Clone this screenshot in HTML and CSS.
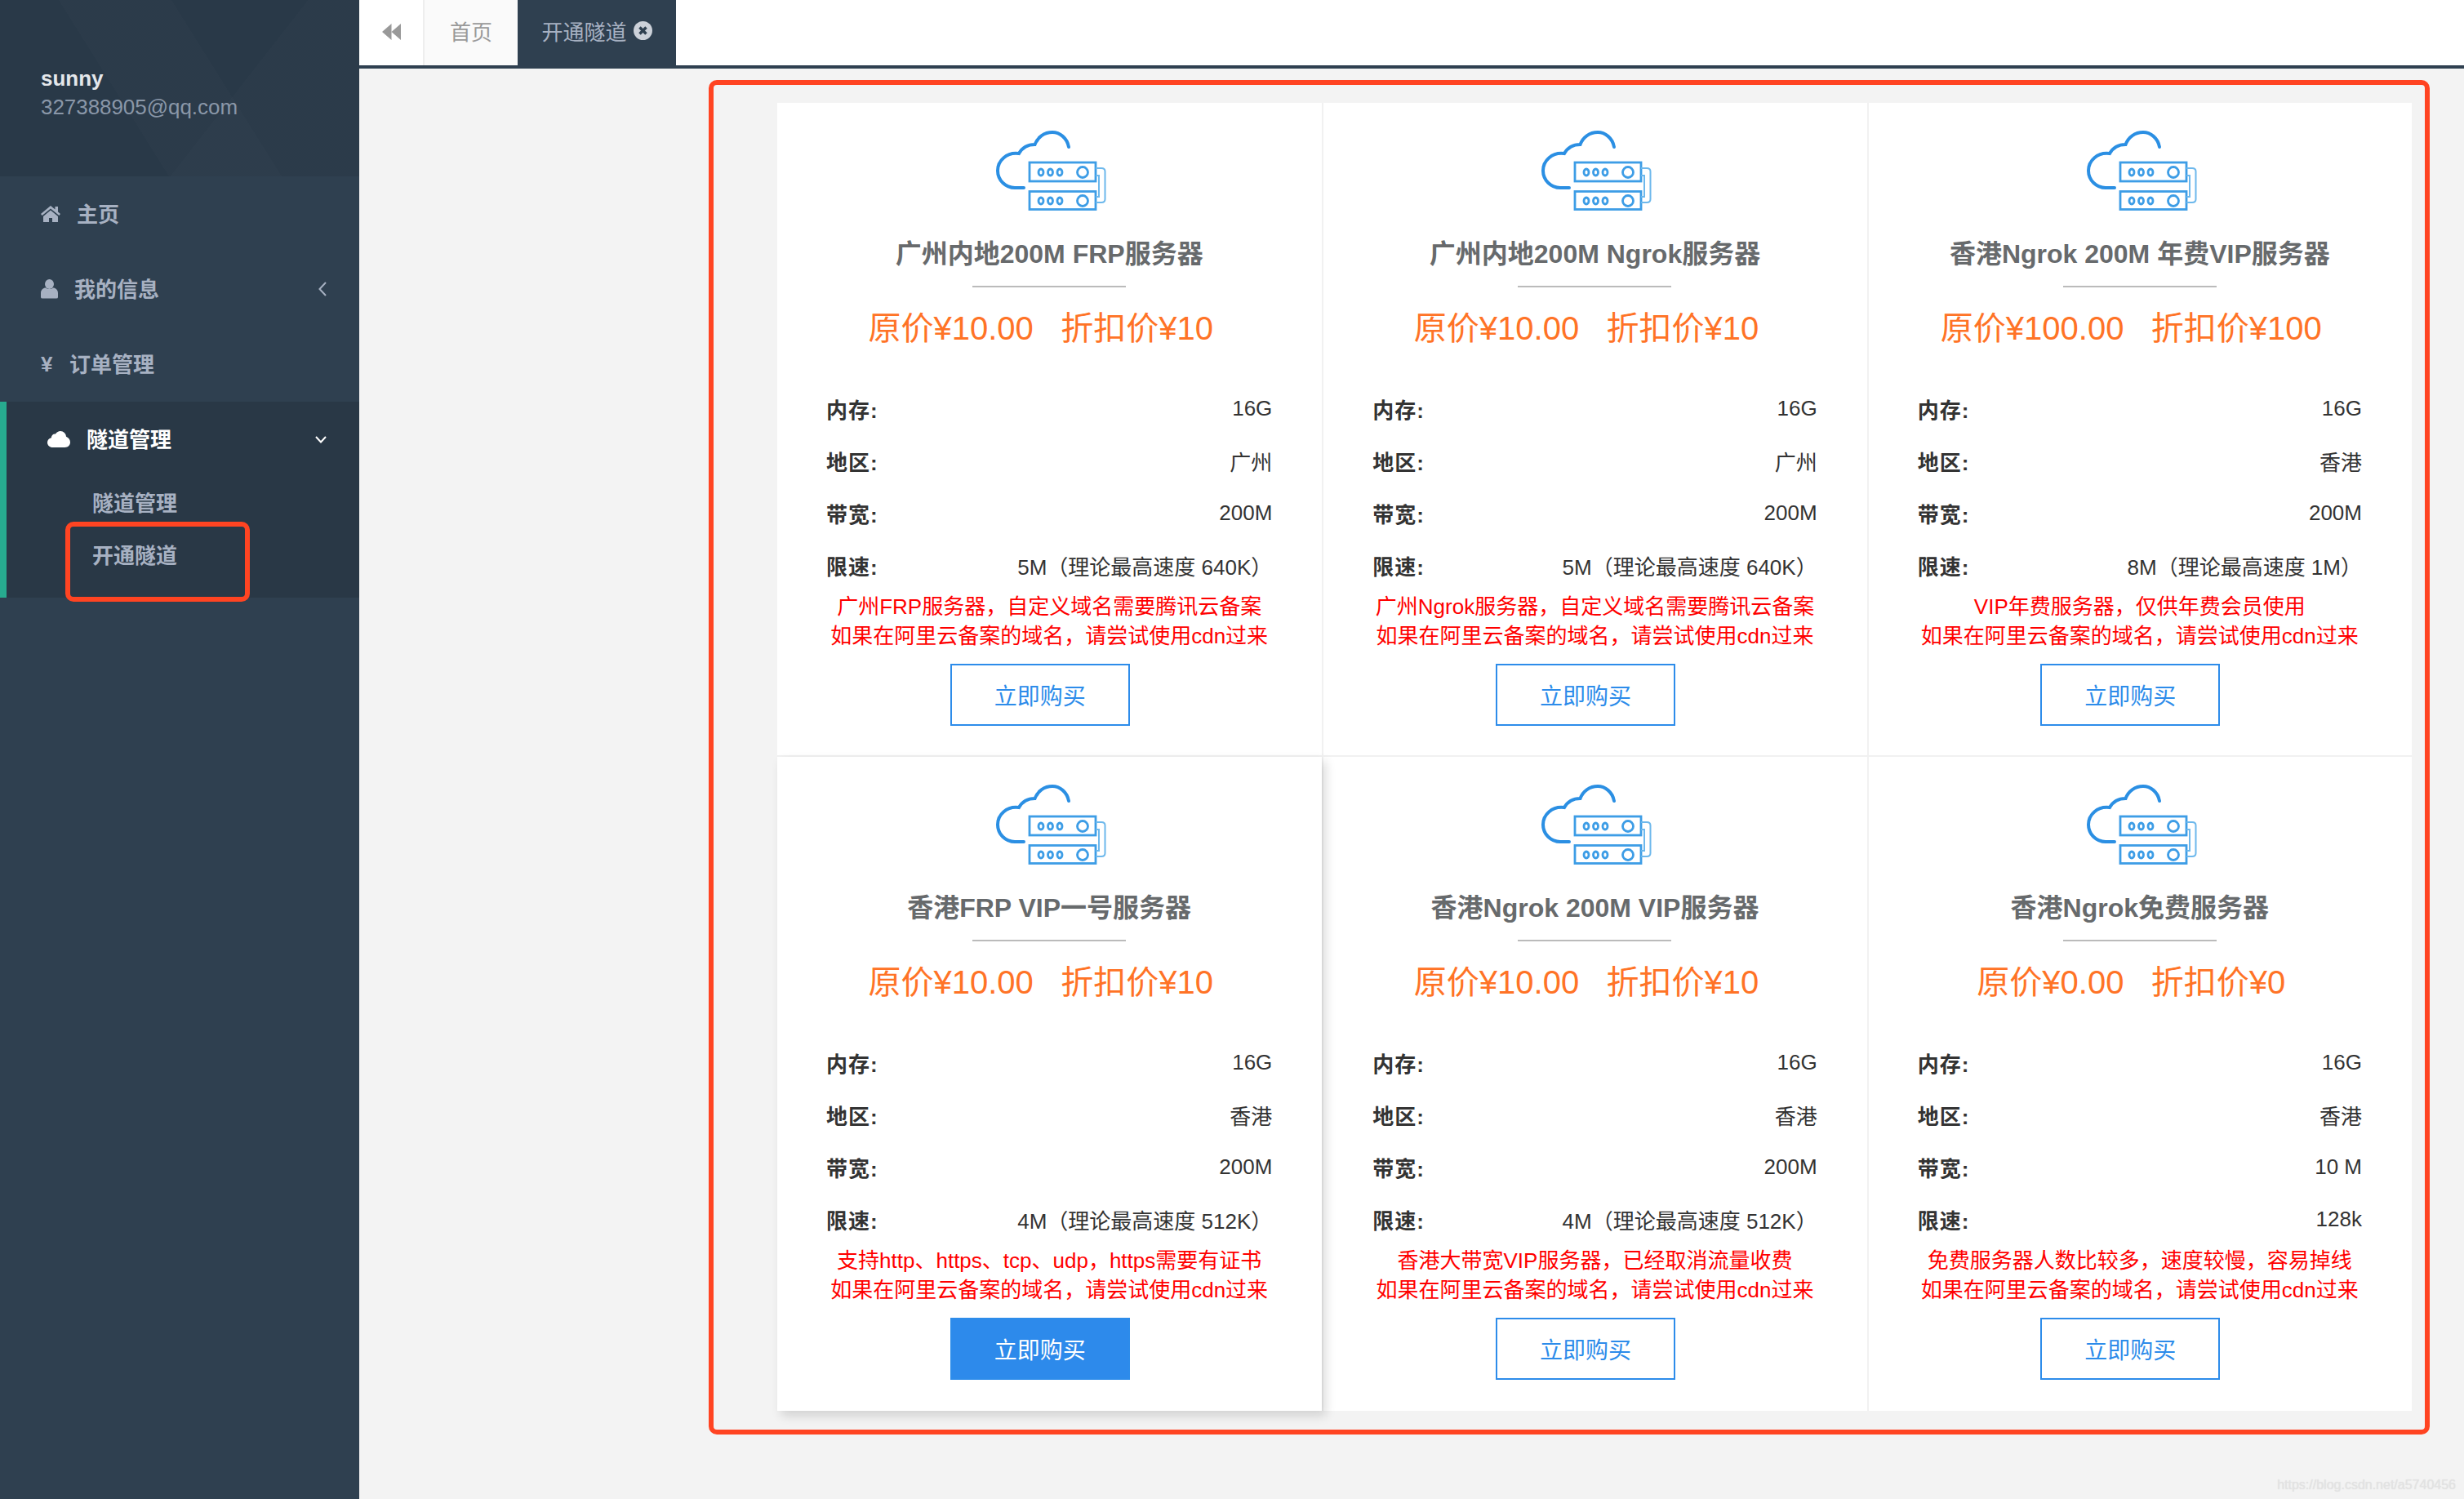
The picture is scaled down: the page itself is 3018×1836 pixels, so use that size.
FILE: index.html
```html
<!DOCTYPE html>
<html lang="en">
<head>
  <meta charset="UTF-8" />
  <title>开通隧道</title>
  <link rel="stylesheet" href="styles.css">
</head>
<body>
  <!-- shared server icon -->
  <svg class="defs" aria-hidden="true">
    <symbol id="server-cloud" viewBox="0 0 136 98">
      <path class="cloud" d="M90 20C88 9 79 2 70 2C60 2 52 8 48.500 17C40 17 33 21 29 28C14 26 3 37 3 49C3 61 13 70 24 70L35 70" />
      <g class="rack">
        <rect x="42" y="39" width="81" height="23" />
        <rect x="42" y="74.500" width="81" height="22" />
        <ellipse cx="56" cy="51" rx="3" ry="4" />
        <ellipse cx="67.500" cy="51" rx="3" ry="4" />
        <ellipse cx="79" cy="51" rx="3" ry="4" />
        <circle cx="107" cy="51" r="6.500" />
        <ellipse cx="56" cy="86" rx="3" ry="4" />
        <ellipse cx="67.500" cy="86" rx="3" ry="4" />
        <ellipse cx="79" cy="86" rx="3" ry="4" />
        <circle cx="107" cy="86" r="6.500" />
      </g>
      <path class="link" d="M123 46H130Q134.500 46 134.500 50V84Q134.500 88 130 88H123M123 55H127V81H123" />
    </symbol>
  </svg>

  <aside class="sidebar">
    <div class="profile">
      <strong class="profile-name">sunny</strong>
      <span class="profile-mail">327388905@qq.com</span>
    </div>
    <nav>
      <a class="nav-item">
        <svg class="nav-icon" width="24" height="20" viewBox="0 0 24 20"><path d="M12 0L17.500 4.600V1H21V7.500L24 10L22.400 12L12 3.600L1.600 12L0 10ZM12 5.500L21 13V20H14V15H10V20H3V13Z" /></svg>
        <span class="nav-label">主页</span>
      </a>
      <a class="nav-item">
        <svg class="nav-icon" width="21" height="24" viewBox="0 0 21 24"><ellipse cx="10.500" cy="6" rx="5.500" ry="6" /><path d="M0 22V17C0 13 3 10.500 6 10.500C7.300 11.500 9 12 10.500 12S13.700 11.500 15 10.500C18 10.500 21 13 21 17V22Q21 23.500 19 23.500H2Q0 23.500 0 22Z" /></svg>
        <span class="nav-label">我的信息</span>
        <svg class="nav-arrow" width="10" height="18" viewBox="0 0 10 18"><path d="M9 1L1.500 9L9 17" /></svg>
      </a>
      <a class="nav-item">
        <span class="nav-yen">¥</span>
        <span class="nav-label">订单管理</span>
      </a>
      <div class="nav-group">
        <a class="nav-item nav-item-open">
          <svg class="nav-icon" width="28" height="20" viewBox="0 0 28 20"><path d="M6.500 20C2.900 20 0 17.400 0 14C0 11.100 2 8.800 4.800 8.200C5 4.800 7.600 3 10 3.500C11.400 1.300 13.700 0 16 0C19.700 0 22.800 3 23 6.700C26 7.900 28 10.700 28 13.800C28 17.200 25.200 20 21.500 20Z" /></svg>
          <span class="nav-label">隧道管理</span>
          <svg class="nav-arrow" width="14" height="9" viewBox="0 0 14 9"><path d="M1 1L7 7.500L13 1" /></svg>
        </a>
        <a class="nav-sub">隧道管理</a>
        <a class="nav-sub">开通隧道</a>
        <div class="mark-box"></div>
      </div>
    </nav>
  </aside>

  <main class="main">
    <header class="tabs">
      <button class="tab-back" aria-label="back">
        <svg width="23" height="20" viewBox="0 0 23 20"><path d="M0 10L11.500 0V20ZM11.500 10L23 0V20Z" /></svg>
      </button>
      <a class="tab">首页</a>
      <a class="tab tab-active">
        开通隧道
        <svg width="23" height="23" viewBox="0 0 23 23"><circle cx="11.500" cy="11.500" r="11.500" /><path d="M7.500 7.500L15.500 15.500M15.500 7.500L7.500 15.500" /></svg>
      </a>
    </header>

    <div class="frame">
      <section class="plans">

        <article class="plan">
          <svg class="plan-icon"><use href="#server-cloud" /></svg>
          <h3>广州内地200M FRP服务器</h3>
          <div class="plan-rule"></div>
          <p class="plan-price">原价¥10.00&nbsp;&nbsp;&nbsp;折扣价¥10</p>
          <dl class="specs">
            <div><dt>内存:</dt><dd>16G</dd></div>
            <div><dt>地区:</dt><dd>广州</dd></div>
            <div><dt>带宽:</dt><dd>200M</dd></div>
            <div><dt>限速:</dt><dd>5M（理论最高速度 640K）</dd></div>
          </dl>
          <p class="plan-note">广州FRP服务器，自定义域名需要腾讯云备案<br />如果在阿里云备案的域名，请尝试使用cdn过来</p>
          <a class="buy">立即购买</a>
        </article>

        <article class="plan">
          <svg class="plan-icon"><use href="#server-cloud" /></svg>
          <h3>广州内地200M Ngrok服务器</h3>
          <div class="plan-rule"></div>
          <p class="plan-price">原价¥10.00&nbsp;&nbsp;&nbsp;折扣价¥10</p>
          <dl class="specs">
            <div><dt>内存:</dt><dd>16G</dd></div>
            <div><dt>地区:</dt><dd>广州</dd></div>
            <div><dt>带宽:</dt><dd>200M</dd></div>
            <div><dt>限速:</dt><dd>5M（理论最高速度 640K）</dd></div>
          </dl>
          <p class="plan-note">广州Ngrok服务器，自定义域名需要腾讯云备案<br />如果在阿里云备案的域名，请尝试使用cdn过来</p>
          <a class="buy">立即购买</a>
        </article>

        <article class="plan">
          <svg class="plan-icon"><use href="#server-cloud" /></svg>
          <h3>香港Ngrok 200M 年费VIP服务器</h3>
          <div class="plan-rule"></div>
          <p class="plan-price">原价¥100.00&nbsp;&nbsp;&nbsp;折扣价¥100</p>
          <dl class="specs">
            <div><dt>内存:</dt><dd>16G</dd></div>
            <div><dt>地区:</dt><dd>香港</dd></div>
            <div><dt>带宽:</dt><dd>200M</dd></div>
            <div><dt>限速:</dt><dd>8M（理论最高速度 1M）</dd></div>
          </dl>
          <p class="plan-note">VIP年费服务器，仅供年费会员使用<br />如果在阿里云备案的域名，请尝试使用cdn过来</p>
          <a class="buy">立即购买</a>
        </article>

        <article class="plan plan-hover">
          <svg class="plan-icon"><use href="#server-cloud" /></svg>
          <h3>香港FRP VIP一号服务器</h3>
          <div class="plan-rule"></div>
          <p class="plan-price">原价¥10.00&nbsp;&nbsp;&nbsp;折扣价¥10</p>
          <dl class="specs">
            <div><dt>内存:</dt><dd>16G</dd></div>
            <div><dt>地区:</dt><dd>香港</dd></div>
            <div><dt>带宽:</dt><dd>200M</dd></div>
            <div><dt>限速:</dt><dd>4M（理论最高速度 512K）</dd></div>
          </dl>
          <p class="plan-note">支持http、https、tcp、udp，https需要有证书<br />如果在阿里云备案的域名，请尝试使用cdn过来</p>
          <a class="buy">立即购买</a>
        </article>

        <article class="plan">
          <svg class="plan-icon"><use href="#server-cloud" /></svg>
          <h3>香港Ngrok 200M VIP服务器</h3>
          <div class="plan-rule"></div>
          <p class="plan-price">原价¥10.00&nbsp;&nbsp;&nbsp;折扣价¥10</p>
          <dl class="specs">
            <div><dt>内存:</dt><dd>16G</dd></div>
            <div><dt>地区:</dt><dd>香港</dd></div>
            <div><dt>带宽:</dt><dd>200M</dd></div>
            <div><dt>限速:</dt><dd>4M（理论最高速度 512K）</dd></div>
          </dl>
          <p class="plan-note">香港大带宽VIP服务器，已经取消流量收费<br />如果在阿里云备案的域名，请尝试使用cdn过来</p>
          <a class="buy">立即购买</a>
        </article>

        <article class="plan">
          <svg class="plan-icon"><use href="#server-cloud" /></svg>
          <h3>香港Ngrok免费服务器</h3>
          <div class="plan-rule"></div>
          <p class="plan-price">原价¥0.00&nbsp;&nbsp;&nbsp;折扣价¥0</p>
          <dl class="specs">
            <div><dt>内存:</dt><dd>16G</dd></div>
            <div><dt>地区:</dt><dd>香港</dd></div>
            <div><dt>带宽:</dt><dd>10 M</dd></div>
            <div><dt>限速:</dt><dd>128k</dd></div>
          </dl>
          <p class="plan-note">免费服务器人数比较多，速度较慢，容易掉线<br />如果在阿里云备案的域名，请尝试使用cdn过来</p>
          <a class="buy">立即购买</a>
        </article>

      </section>
    </div>

    <span class="watermark">https://blog.csdn.net/a5740456</span>
  </main>
</body>
</html>
```

FILE: styles.css
```css
* {
  box-sizing: border-box;
}

body {
  margin: 0;
  height: 100vh;
  display: flex;
  overflow: hidden;
  font-family: "Liberation Sans", "Noto Sans CJK SC", sans-serif;
  font-size: 26px;
  background: #f3f3f3;
}

.defs {
  position: absolute;
  width: 0;
  height: 0;
}

/* Sidebar */
.sidebar {
  width: 440px;
  flex-shrink: 0;
  background: #2f4050;
  color: #a7b1c2;
}

.profile {
  height: 216px;
  padding: 81px 0 0 50px;
  display: flex;
  flex-direction: column;
  gap: 5px;
  line-height: 30px;
  background:
    linear-gradient(128deg, transparent 62%, rgba(255, 255, 255, 0.012) 62%),
    linear-gradient(58deg, transparent 36%, rgba(255, 255, 255, 0.012) 36%, rgba(255, 255, 255, 0.012) 60%, transparent 60%),
    #293948;
}

.profile-name {
  color: #e4e7eb;
}

.profile-mail {
  color: #8a97a8;
  letter-spacing: -0.05px;
}

.nav-item {
  height: 92px;
  padding: 0 40px 0 50px;
  display: flex;
  align-items: center;
  gap: 20px;
  font-weight: bold;
}

.nav-label {
  margin-bottom: 3px;
}

.nav-icon {
  fill: #a7b1c2;
}

.nav-yen {
  width: 15px;
}

.nav-arrow {
  margin-left: auto;
  fill: none;
  stroke: #a7b1c2;
  stroke-width: 2;
}

.nav-group {
  position: relative;
  height: 240px;
  border-left: 8px solid #27ab8f;
  background: #293846;
}

.nav-item-open {
  color: #fff;
}

.nav-item-open .nav-icon {
  fill: #fff;
}

.nav-item-open .nav-arrow {
  stroke: #fff;
}

.nav-sub {
  display: block;
  height: 64px;
  line-height: 64px;
  padding-left: 105px;
  font-weight: bold;
}

.nav-item-open + .nav-sub {
  margin-top: 1px;
}

/* red annotation round the menu entry */
.mark-box {
  position: absolute;
  top: 147px;
  left: 72px;
  width: 226px;
  height: 98px;
  border: 6px solid #ff4422;
  border-radius: 10px;
}

/* Main area */
.main {
  flex: 1;
  position: relative;
}

.tabs {
  height: 84px;
  display: flex;
  background: #fff;
  border-bottom: 4px solid #2f4050;
}

.tab-back {
  width: 78px;
  padding: 0;
  border: none;
  background: #fff;
}

.tab-back svg {
  fill: #999;
}

.tab {
  width: 116px;
  padding-bottom: 5px;
  display: flex;
  align-items: center;
  justify-content: center;
  gap: 8px;
  color: #999;
  background: #fafafa;
  border-left: 2px solid #eee;
}

.tab-active {
  width: 194px;
  border-left: none;
  color: #a7b1c2;
  background: #2f4050;
}

.tab-active circle {
  fill: #ccd1d9;
}

.tab-active path {
  fill: none;
  stroke: #2f4050;
  stroke-width: 3.500;
}

.frame {
  margin: 14px 42px 0 428px;
  padding: 22px 16px 23px 78px;
  border: 6px solid #ff4422;
  border-radius: 10px;
}

.plans {
  display: grid;
  grid-template-columns: repeat(3, 1fr);
}

.plan {
  position: relative;
  height: 801px;
  padding: 34px 61px 0 60px;
  display: flex;
  flex-direction: column;
  align-items: center;
  background: #fff;
  border-left: 2px solid #f1f1f1;
  border-bottom: 2px solid #f1f1f1;
}

.plan:nth-child(3n+1) {
  border-left: none;
}

.plan:nth-child(n+4) {
  border-bottom: none;
}

.plan-hover {
  z-index: 1;
  box-shadow: 5px 6px 12px rgba(0, 0, 0, 0.14);
}

.plan-icon {
  width: 136px;
  height: 98px;
  flex-shrink: 0;
  margin-left: 4px;
  fill: none;
}

.cloud {
  stroke: #2b8fe3;
  stroke-width: 4;
  stroke-linecap: round;
}

.rack {
  stroke: #3d9de6;
  stroke-width: 2.800;
}

.link {
  stroke: #6db8ec;
  stroke-width: 2;
}

.plan h3 {
  margin: 31px 0 0;
  font-size: 32px;
  line-height: 44px;
  color: #676a6c;
  white-space: nowrap;
}

.plan-rule {
  width: 188px;
  height: 2px;
  margin-top: 17px;
  background: #bbb;
}

.plan-price {
  margin: 22px 0 0;
  padding-right: 21px;
  font-size: 40px;
  line-height: 56px;
  color: #ff7326;
  white-space: nowrap;
}

.specs {
  width: 100%;
  margin: 38px 0 0;
  color: #333;
}

.specs div {
  height: 64px;
  display: flex;
  align-items: center;
  justify-content: space-between;
}

.specs dt {
  font-weight: bold;
  letter-spacing: 1px;
}

.specs dd {
  margin: 0;
}

.plan-note {
  margin: 1px 0 0;
  width: 100%;
  text-align: center;
  line-height: 36px;
  color: #f00;
  white-space: nowrap;
}

.buy {
  width: 220px;
  height: 76px;
  margin: 16px 23px 0 0;
  display: flex;
  align-items: center;
  justify-content: center;
  font-size: 28px;
  color: #2d8cea;
  border: 2px solid #2d8cea;
}

.plan-hover .buy {
  color: #fff;
  background: #2d8aeb;
}

.watermark {
  position: absolute;
  right: 10px;
  bottom: 8px;
  font-size: 16px;
  color: #e3e3e3;
  text-shadow: 0 0 1px #ddd;
}
```
